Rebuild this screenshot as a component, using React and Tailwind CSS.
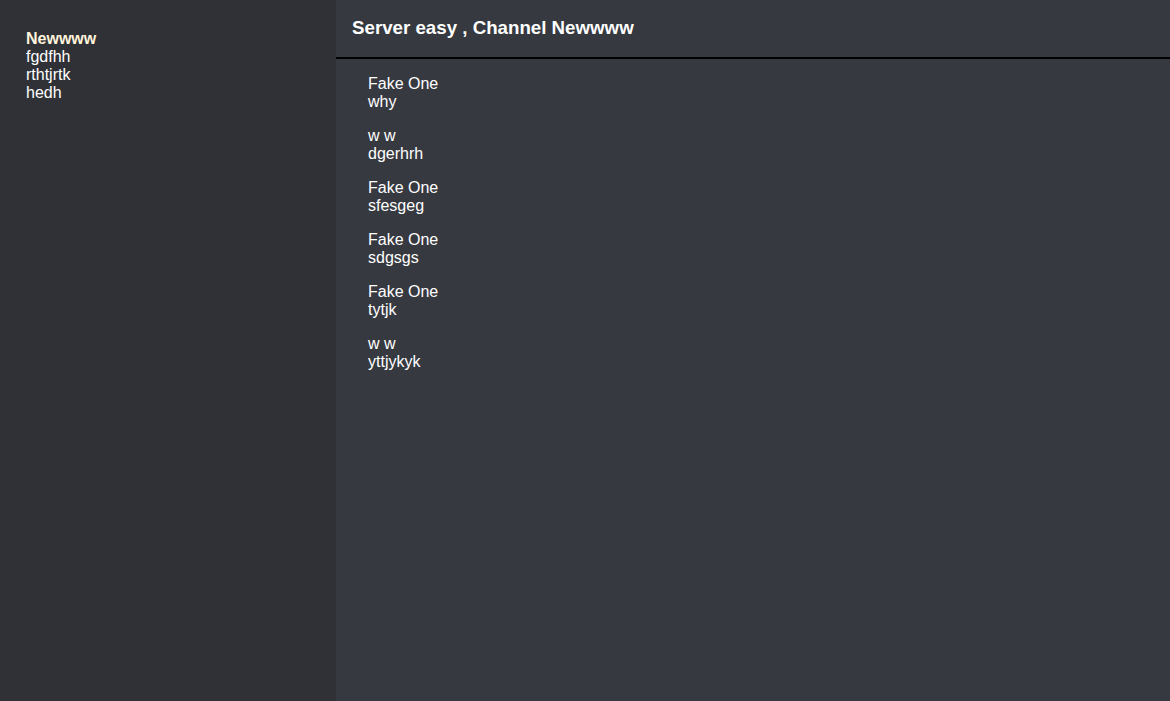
const channels = ['fgdfhh', 'rthtjrtk', 'hedh'];

const messages = [
  { author: 'Fake One', text: 'why' },
  { author: 'w w', text: 'dgerhrh' },
  { author: 'Fake One', text: 'sfesgeg' },
  { author: 'Fake One', text: 'sdgsgs' },
  { author: 'Fake One', text: 'tytjk' },
  { author: 'w w', text: 'yttjykyk' },
];

export default function App() {
  return (
    <div className="flex h-[701px] w-full font-['Liberation_Sans',Arial,sans-serif] text-base text-white">
      {/* Sidebar */}
      <aside className="w-[336px] shrink-0 bg-[#2f3136] px-[26px] pt-[30px] leading-[18px]">
        <div className="font-bold text-[#fff4dc]">Newwww</div>
        {channels.map((c) => (
          <div key={c}>{c}</div>
        ))}
      </aside>

      {/* Main */}
      <main className="flex-1 flex flex-col bg-[#36393f]">
        <header className="h-[59px] flex items-center px-4 border-b-2 border-black pb-[1px]">
          <h1 className="text-[18.72px] font-bold">Server easy , Channel Newwww</h1>
        </header>

        <div className="px-8 pt-4 flex flex-col gap-4 leading-[18px]">
          {messages.map((m, i) => (
            <div key={i}>
              <div>{m.author}</div>
              <div>{m.text}</div>
            </div>
          ))}
        </div>
      </main>
    </div>
  );
}
